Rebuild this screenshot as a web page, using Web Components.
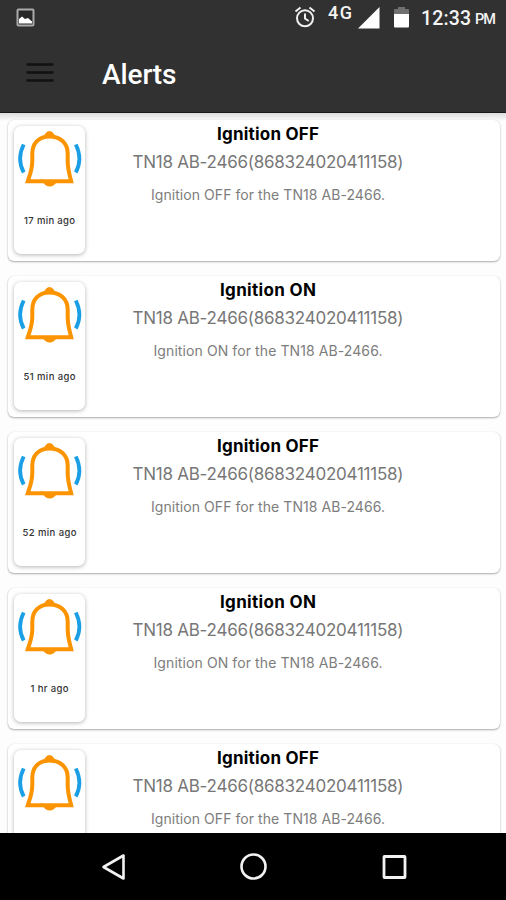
<!DOCTYPE html>
<html lang="en">
<head>
<meta charset="utf-8">
<title>Alerts</title>
<style>
html,body{margin:0;padding:0;background:#fdfdfd;width:506px;height:900px;overflow:hidden}
</style>
</head>
<body>
<alerts-screen></alerts-screen>
<script>
// A single line of text whose tracking is adjusted to fill a given width.
class FitText extends HTMLElement {
  connectedCallback() {
    const root = this.attachShadow({mode: 'open'});
    root.innerHTML = `<style>:host{display:block;white-space:nowrap}span{display:inline-block}</style><span></span>`;
    const span = root.querySelector('span');
    const text = this.getAttribute('text');
    span.textContent = text;
    const gap = (Number(this.getAttribute('width')) - span.getBoundingClientRect().width) / (text.length - 1);
    span.style.letterSpacing = gap + 'px';
    span.style.marginRight = -gap + 'px';
  }
}
customElements.define('fit-text', FitText);

class StatusBar extends HTMLElement {
  connectedCallback() {
    this.attachShadow({mode: 'open'}).innerHTML = `
<style>
:host{display:flex;height:36px;box-sizing:border-box;padding:0 10px 0 16px;color:#f4f4f4;font-family:Roboto,sans-serif;align-items:flex-start}
svg{display:block;flex:none}
.pic{margin-top:8px}
.alarm{margin:6px 0 0 auto}
.net{margin:3px 0 0 12px;font-size:18px;line-height:20px;font-weight:500}
.sig{margin:7px 0 0 6px}
.bat{margin:7px 0 0 14px}
.time{margin:7px 0 0 12px;font-size:19.5px;line-height:24px;font-weight:500}
.pm{margin:11px 0 0 4px;font-size:14.5px;line-height:18px;font-weight:500}
</style>
<svg class="pic" width="19" height="19" viewBox="0 0 19 19"><rect x="1.5" y="1.5" width="16" height="16" rx="1" fill="#282828" stroke="#aaa" stroke-width="2"/><path d="M3 15.5V11L6 8.5 9 11l3-1 4 3.500v2z" fill="#fff"/></svg>
<svg class="alarm" width="22" height="22" viewBox="0 0 22 22" fill="none" stroke="#efefef" stroke-width="2"><circle cx="11" cy="12.300" r="8"/><path d="M11 7.500v5l3.700 2.500M1.500 5.500l5-4M20.500 5.500l-5-4"/></svg>
<fit-text class="net" text="4G" width="24"></fit-text>
<svg class="sig" width="22" height="22" viewBox="0 0 22 22"><path d="M21.500 0v21.500H0z" fill="#fff"/></svg>
<svg class="bat" width="15" height="21" viewBox="0 0 15 21"><path d="M0 7V3q0-1 1-1h3V0h7v2h3q1 0 1 1v4z" fill="#707070"/><path d="M0 7h15v12.500q0 1-1 1H1q-1 0-1-1z" fill="#fff"/></svg>
<fit-text class="time" text="12:33" width="50"></fit-text>
<fit-text class="pm" text="PM" width="21"></fit-text>`;
  }
}
customElements.define('status-bar', StatusBar);

class AppBar extends HTMLElement {
  connectedCallback() {
    this.attachShadow({mode: 'open'}).innerHTML = `
<style>
:host{display:flex;height:76px;padding-left:26px;color:#fff;font:500 28px/32px Roboto,sans-serif}
svg{margin:26px 48px 0 0;flex:none}
fit-text{margin-top:23px}
</style>
<svg width="28" height="22" viewBox="0 0 28 22"><path d="M.5 2.500h27M.5 10.500h27M.5 18.500h27" stroke="#111" stroke-width="2.300"/></svg>
<fit-text text="Alerts" width="74.500"></fit-text>`;
  }
}
customElements.define('app-bar', AppBar);

class BellIcon extends HTMLElement {
  connectedCallback() {
    this.attachShadow({mode: 'open'}).innerHTML = `
<style>:host{display:block}svg{display:block}</style>
<svg width="66" height="58" viewBox="0 0 66 58" fill="none">
<g stroke="#1a9fe6" stroke-width="3.800"><path d="M6.700 14.500Q-.500 29 6.700 42.500M58.800 14.500Q66 29 58.800 42.500"/></g>
<path d="M15.300 31V23.500C15.300 13 22 6.500 32.500 6.500S50.700 13 50.700 23.500V31C50.700 39 52 43 54.200 51.200H10.800C13.500 43 15.300 39 15.300 31Z" stroke="#fb9400" stroke-width="4"/>
<path d="M25 7.500Q27.500 6 28 4Q30 1 32.500 1T37 4Q37.500 6 41 7.500ZM25.500 51.500H40Q37 56.500 32.700 56.500T25.500 51.500Z" fill="#fb9400"/>
</svg>`;
  }
}
customElements.define('bell-icon', BellIcon);

class AlertCard extends HTMLElement {
  connectedCallback() {
    const g = n => this.getAttribute(n);
    const on = g('state') === 'ON';
    const ago = g('ago') ? `<fit-text class="ago" text="${g('ago')}" width="${g('agowidth')}"></fit-text>` : '';
    this.attachShadow({mode: 'open'}).innerHTML = `
<style>
:host{display:flex;flex:none;height:141px;box-sizing:border-box;padding:6px 0 0 6px;background:#fff;border-radius:6px;font-family:Inter,sans-serif;box-shadow:0 1px 2px rgba(0,0,0,.32),0 0 1px rgba(0,0,0,.12)}
.tile{display:flex;flex-direction:column;align-items:center;flex:none;width:71px;height:128px;border-radius:7px;background:#fff;box-shadow:0 1px 4px rgba(0,0,0,.3)}
bell-icon{margin-top:4px}
.ago{margin-top:27px;color:#333;font-size:9.5px;line-height:12px;font-weight:500}
.copy{display:flex;flex-direction:column;align-items:center;flex:1;margin:-3px 50px 0 1px}
.title{color:#000;font-size:17px;line-height:22px;font-weight:700}
.unit{margin-top:6px;color:#777;font-size:17px;line-height:22px}
.note{margin-top:13px;color:#7d7d7d;font-size:14px;line-height:18px}
</style>
<div class="tile"><bell-icon></bell-icon>${ago}</div>
<div class="copy">
<fit-text class="title" text="Ignition ${g('state')}" width="${on ? 96 : 102}"></fit-text>
<fit-text class="unit" text="TN18 AB-2466(868324020411158)" width="271"></fit-text>
<fit-text class="note" text="Ignition ${g('state')} for the TN18 AB-2466." width="${on ? 229 : 234}"></fit-text>
</div>`;
  }
}
customElements.define('alert-card', AlertCard);

class NavBar extends HTMLElement {
  connectedCallback() {
    this.attachShadow({mode: 'open'}).innerHTML = `
<style>:host{display:flex;justify-content:space-between;align-items:center;height:67px;padding:0 99px 0 101px;box-sizing:border-box;background:#000}svg{display:block}</style>
<svg width="25" height="28" viewBox="0 0 25 28"><path d="M2.500 14 22.500 2.500v23z" fill="none" stroke="#f2f2f2" stroke-width="2.600" stroke-linejoin="round"/></svg>
<svg width="28" height="28" viewBox="0 0 28 28"><circle cx="13.500" cy="13.500" r="12" fill="none" stroke="#f2f2f2" stroke-width="2.600"/></svg>
<svg width="25" height="26" viewBox="0 0 25 26"><rect x="2" y="2.500" width="21" height="21" rx=".5" fill="none" stroke="#f2f2f2" stroke-width="2.800"/></svg>`;
  }
}
customElements.define('nav-bar', NavBar);

class AlertsScreen extends HTMLElement {
  connectedCallback() {
    this.attachShadow({mode: 'open'}).innerHTML = `
<style>
:host{display:flex;flex-direction:column;width:506px;height:900px;overflow:hidden;background:#fdfdfd}
header{flex:none;height:112px;background:#313131;border-bottom:1px solid #191919}
main{flex:1;min-height:0;overflow:hidden;display:flex;flex-direction:column;gap:15px;padding:7px 6px 0 8px;background:linear-gradient(#dcdcdc 0,#ececec 4px,#fdfdfd 8px)}
nav-bar{flex:none}
</style>
<header><status-bar></status-bar><app-bar></app-bar></header>
<main>
<alert-card state="OFF" ago="17 min ago" agowidth="51"></alert-card>
<alert-card state="ON" ago="51 min ago" agowidth="52"></alert-card>
<alert-card state="OFF" ago="52 min ago" agowidth="54"></alert-card>
<alert-card state="ON" ago="1 hr ago" agowidth="38"></alert-card>
<alert-card state="OFF"></alert-card>
</main>
<nav-bar></nav-bar>`;
  }
}
customElements.define('alerts-screen', AlertsScreen);
</script>
</body>
</html>
